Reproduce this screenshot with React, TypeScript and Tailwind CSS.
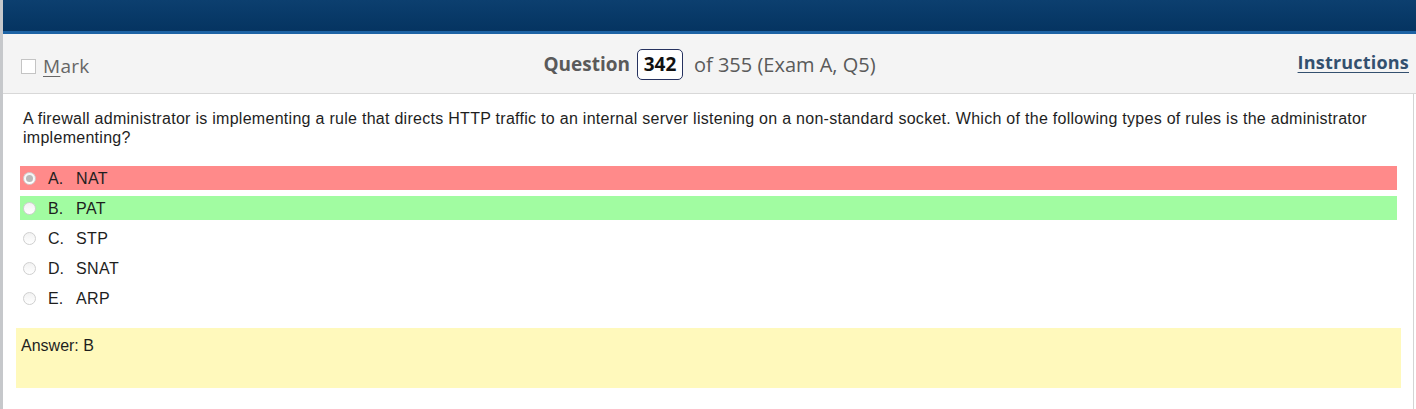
const options = [
  { key: 'A', text: 'NAT', tone: 'wrong', picked: true },
  { key: 'B', text: 'PAT', tone: 'right', picked: false },
  { key: 'C', text: 'STP', tone: 'none', picked: false },
  { key: 'D', text: 'SNAT', tone: 'none', picked: false },
  { key: 'E', text: 'ARP', tone: 'none', picked: false },
] as const;

function Radio({ picked }: { picked: boolean }) {
  return (
    <span className="w-[13px] h-[13px] rounded-full border border-[#cfcfcf] bg-gradient-to-b from-[#f2f2f2] to-white flex items-center justify-center shrink-0">
      {picked && <span className="w-[7px] h-[7px] rounded-full bg-[#b9b9b9]" />}
    </span>
  );
}

function OptionRow({ option }: { option: (typeof options)[number] }) {
  const bg =
    option.tone === 'wrong' ? 'bg-[#ff8a8a]' : option.tone === 'right' ? 'bg-[#a1fca1]' : '';
  return (
    <div className={`h-[24px] flex items-center pl-[3px] ${bg}`}>
      <Radio picked={option.picked} />
      <span className="ml-[12px] w-[28px]">{option.key}.</span>
      <span className="tracking-[0.4px]">{option.text}</span>
    </div>
  );
}

export default function App() {
  return (
    <div className="w-[1416px] h-[409px] overflow-hidden bg-white border-l-[3px] border-[#c6c8cb] flex flex-col">
      <div className="h-[34px] shrink-0 bg-gradient-to-b from-[#0c3f6f] to-[#053461] border-b-[3px] border-[#1d63a4]" />

      <div
        className="h-[60px] shrink-0 bg-[#f4f4f4] border-b border-[#d8d8d8] flex items-center px-[18px] text-[19px] text-[#5a5a5a]"
        style={{ fontFamily: '"Open Sans", "Noto Sans", sans-serif' }}
      >
        <div className="flex-1 flex items-center gap-[7px] mt-[6px] text-[#666]">
          <span className="w-[15px] h-[15px] border border-[#c4c4c4] bg-white" />
          <span className="tracking-[0.3px]">
            <span className="underline underline-offset-[3px]">M</span>ark
          </span>
        </div>
        <div className="flex items-center mt-[2px]">
          <span className="font-bold">Question</span>
          <span className="ml-[7px] h-[31px] w-[46px] flex items-center justify-center rounded-[5px] border border-[#26325f] bg-white font-bold text-[#111]">
            342
          </span>
          <span className="ml-[11px] text-[20px]">of 355 (Exam A, Q5)</span>
        </div>
        <div className="flex-1 flex justify-end">
          <span className="text-[18px] font-bold text-[#33506f] underline underline-offset-[3px] -mr-[11px] -mt-[3px] tracking-[0.2px]">
            Instructions
          </span>
        </div>
      </div>

      <div
        className="flex-1 mr-[2px] border-r border-[#d4d4d4] pt-[15px] pl-[17px] pr-[16px] text-[16px] leading-[19px] text-[#1e1e1e]"
        style={{ fontFamily: '"Liberation Sans", Arial, sans-serif' }}
      >
        <p className="pl-[3px] tracking-[0.28px]">
          A firewall administrator is implementing a rule that directs HTTP traffic to an internal
          server listening on a non-standard socket. Which of the following types of rules is the
          administrator implementing?
        </p>

        <div className="mt-[19px] flex flex-col gap-[6px]">
          {options.map((o) => (
            <OptionRow key={o.key} option={o} />
          ))}
        </div>

        <div className="mt-[18px] -ml-[4px] -mr-[4px] h-[60px] bg-[#fff9bc] pl-[5px] pt-[8px]">
          Answer: B
        </div>
      </div>
    </div>
  );
}
